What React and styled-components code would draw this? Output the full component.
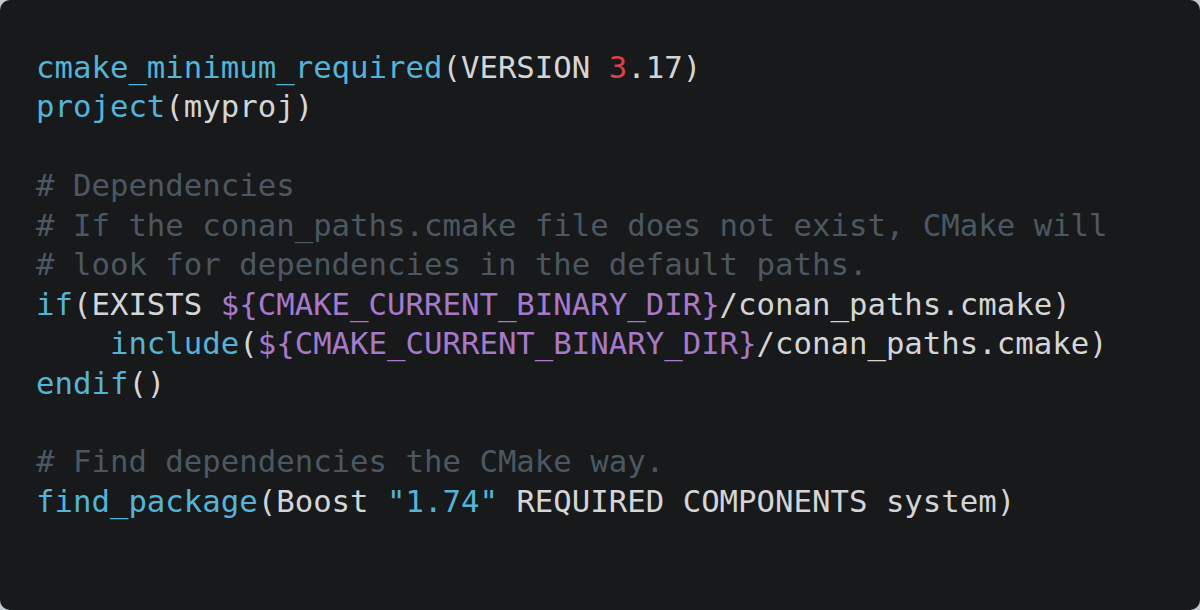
import React from "react";
import styled, { createGlobalStyle } from "styled-components";

const Global = createGlobalStyle`
  html, body { margin: 0; padding: 0; background: #c3c9d0; }
  #root { width: 1200px; height: 610px; }
`;

const Card = styled.div`
  box-sizing: border-box;
  width: 1200px;
  height: 610px;
  background: #18191b;
  border-radius: 10px;
  padding: 48px 36px 0 36px;
  overflow: hidden;
`;

const Code = styled.pre`
  margin: 0;
  font-family: "DejaVu Sans Mono", "Liberation Mono", monospace;
  font-size: 30.7px;
  line-height: 39.45px;
  color: #d4d5d6;
  white-space: pre;
`;

const Line = styled.div`
  height: 39.45px;
`;

const colors = {
  fn: "#55b3d8",
  var: "#a67ac9",
  num: "#d8434b",
  str: "#55b3d8",
  comment: "#4b5862",
  plain: "#d4d5d6",
};

const Tok = styled.span`
  color: ${(p) => colors[p.$k] || colors.plain};
`;

const lines = [
  [["fn", "cmake_minimum_required"], ["plain", "(VERSION "], ["num", "3"], ["plain", ".17)"]],
  [["fn", "project"], ["plain", "(myproj)"]],
  [],
  [["comment", "# Dependencies"]],
  [["comment", "# If the conan_paths.cmake file does not exist, CMake will"]],
  [["comment", "# look for dependencies in the default paths."]],
  [["fn", "if"], ["plain", "(EXISTS "], ["var", "${CMAKE_CURRENT_BINARY_DIR}"], ["plain", "/conan_paths.cmake)"]],
  [["plain", "    "], ["fn", "include"], ["plain", "("], ["var", "${CMAKE_CURRENT_BINARY_DIR}"], ["plain", "/conan_paths.cmake)"]],
  [["fn", "endif"], ["plain", "()"]],
  [],
  [["comment", "# Find dependencies the CMake way."]],
  [["fn", "find_package"], ["plain", "(Boost "], ["str", "\"1.74\""], ["plain", " REQUIRED COMPONENTS system)"]],
];

export default function App() {
  return (
    <>
      <Global />
      <Card>
        <Code>
          {lines.map((toks, i) => (
            <Line key={i}>
              {toks.map(([k, t], j) => (
                <Tok key={j} $k={k}>
                  {t}
                </Tok>
              ))}
            </Line>
          ))}
        </Code>
      </Card>
    </>
  );
}
